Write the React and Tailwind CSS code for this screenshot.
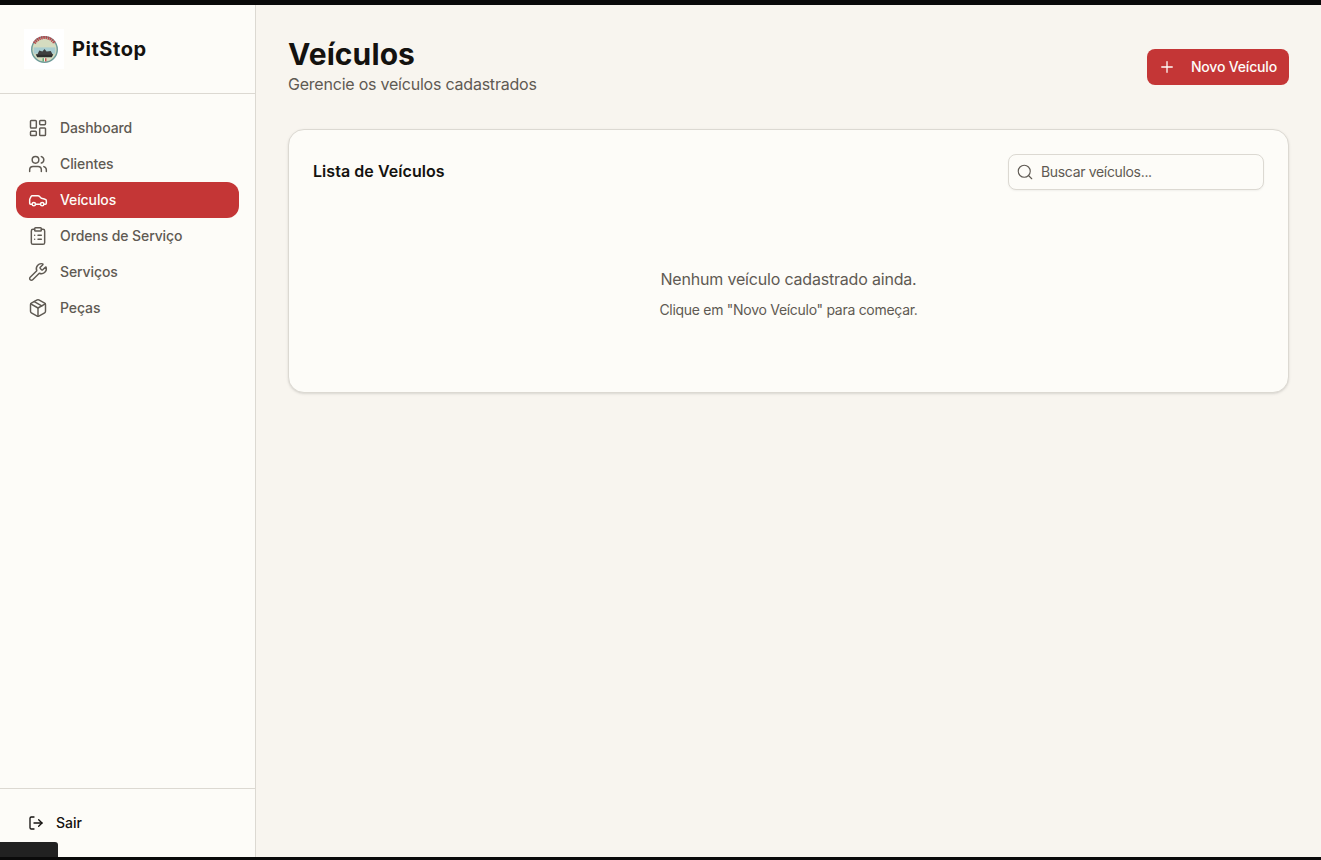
import React from "react";
import { LayoutDashboard, Users, Car, ClipboardList, Wrench, Package, LogOut, Plus, Search } from "lucide-react";

const nav = [
  ["Dashboard", LayoutDashboard],
  ["Clientes", Users],
  ["Veículos", Car, true],
  ["Ordens de Serviço", ClipboardList],
  ["Serviços", Wrench],
  ["Peças", Package],
];

function Logo() {
  return (
    <div className="w-10 h-10 bg-white flex items-center justify-center shrink-0">
      <svg width="27" height="27" viewBox="0 0 26 26">
        <circle cx="13" cy="13" r="13" fill="#6f9c9a" />
        <circle cx="13" cy="13" r="11.6" fill="#d5dcc0" />
        <path d="M3.2 7 A11.4 11.4 0 0 1 22.8 7" fill="none" stroke="#b5474c" strokeWidth="3" strokeDasharray="1.5 .6" />
        <path d="M2.6 11 H23.4 V17 H2.6 Z" fill="#a9cdd0" />
        <path d="M6 18 L8 14 L11 15 L13 12.5 L15 15 L19 14.5 L21 18 Z" fill="#3f3f3f" />
        <path d="M4.5 17.5 H21.5 L20 20.5 H6 Z" fill="#2e2e2e" />
        <rect x="11.2" y="21.4" width="1.2" height="3" fill="#3c9a55" />
        <rect x="12.4" y="21.4" width="1.2" height="3" fill="#f4f4f4" />
        <rect x="13.6" y="21.4" width="1.2" height="3" fill="#cc3d3d" />
      </svg>
    </div>
  );
}

export default function App() {
  return (
    <div className="relative h-[860px] w-full overflow-hidden bg-[#0a0a0a] pt-[5px] pb-[3px] flex font-['Inter','Liberation_Sans',sans-serif]">
      <aside className="w-[256px] shrink-0 bg-[#fdfcf8] border-r border-[#dcd9d2] flex flex-col">
        <div className="h-[89px] border-b border-[#dcd9d2] pl-6 pr-4 flex items-center gap-2">
          <Logo />
          <span className="text-[20px] leading-7 font-bold text-[#14120f] tracking-[0.55px]">PitStop</span>
        </div>
        <nav className="flex-1 px-4 pt-4 flex flex-col">
          {nav.map(([label, Icon, active]) => (
            <div
              key={label}
              className={
                "h-9 rounded-xl px-3 flex items-center gap-3 text-[14px] font-medium tracking-[-0.1px] " +
                (active ? "bg-[#c43636] text-[#fdfcf8]" : "text-[#5f5a53]")
              }
            >
              <Icon size={20} strokeWidth={1.75} />
              <span className="pb-[2px]">{label}</span>
            </div>
          ))}
        </nav>
        <div className="h-[69px] border-t border-[#dcd9d2] pl-7 flex items-center gap-3 text-[14px] font-medium text-[#14120f]">
          <LogOut size={16} strokeWidth={2} />
          <span className="pb-[2px]">Sair</span>
        </div>
      </aside>
      <main className="flex-1 bg-[#f8f5ef] px-8 pt-8">
        <div className="h-[60px] flex items-center justify-between">
          <div className="self-start">
            <h1 className="text-[30px] leading-[34px] font-bold text-[#14120f] tracking-[0.1px]">Veículos</h1>
            <p className="pt-px text-[16px] leading-6 text-[#5f5a53] tracking-[-0.22px]">Gerencie os veículos cadastrados</p>
          </div>
          <button className="h-9 rounded-lg bg-[#c43636] text-[#fdfcf8] pl-[11px] pr-3 flex items-center gap-[15px] text-[14px] font-medium tracking-[-0.17px]">
            <Plus size={18} strokeWidth={1.75} />
            <span className="pb-[2px]">Novo Veículo</span>
          </button>
        </div>
        <section className="mt-8 h-[264px] rounded-2xl border border-[#dcd9d2] bg-[#fdfcf8] shadow-sm p-6">
          <div className="flex items-center justify-between">
            <h2 className="text-[16px] leading-6 font-semibold text-[#14120f] tracking-[0.06px] pb-[2px]">Lista de Veículos</h2>
            <div className="w-[256px] h-9 rounded-lg border border-[#dcd9d2] bg-[#fdfcf8] shadow-xs flex items-center pl-[7px] gap-[7px]">
              <Search size={18} strokeWidth={1.5} className="text-[#5f5a53]" />
              <span className="pb-[2px] text-[14px] text-[#5f5a53] tracking-[-0.33px]">Buscar veículos...</span>
            </div>
          </div>
          <div className="mt-[77px] flex flex-col items-center">
            <p className="text-[16px] leading-6 text-[#5f5a53] tracking-[-0.19px]">Nenhum veículo cadastrado ainda.</p>
            <p className="mt-[9px] text-[14px] leading-5 text-[#5f5a53] tracking-[-0.29px]">Clique em "Novo Veículo" para começar.</p>
          </div>
        </section>
      </main>
      <div className="absolute left-0 bottom-[3px] w-[58px] h-[15px] bg-[#212121] rounded-tr-[3px]" />
    </div>
  );
}
